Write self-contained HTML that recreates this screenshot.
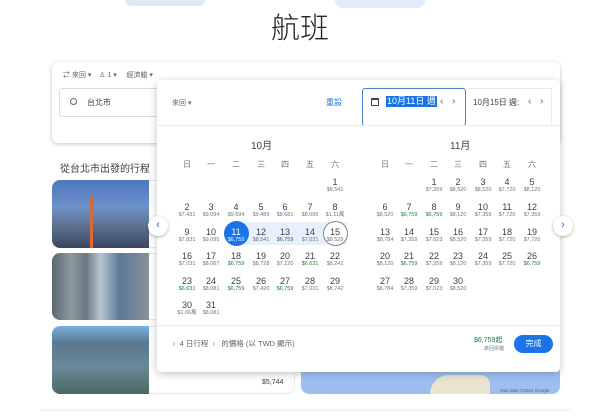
<!DOCTYPE html>
<html><head><meta charset="utf-8"><style>
*{margin:0;padding:0;box-sizing:border-box}
body{width:600px;height:417px;overflow:hidden;background:#fff;font-family:"Liberation Sans","Noto Sans CJK TC",sans-serif;color:#3c4043;position:relative}
.a{position:absolute}
i{position:absolute;width:30px;margin-left:-15px;text-align:center;font-style:normal;font-size:9px;line-height:10px;color:#3c4043}
i b{display:block;font-weight:normal;font-size:5.5px;line-height:7px;color:#70757a}
i.g b{color:#188038}
.wd{position:absolute;font-size:8px;color:#70757a;width:20px;margin-left:-10px;text-align:center}
</style></head><body>
<div class="a" style="left:125px;top:0;width:80px;height:6px;background:#dfe8f7;border-radius:0 0 40px 40px"></div>
<div class="a" style="left:335px;top:0;width:90px;height:8px;background:#e3ecf9;border-radius:0 0 45px 45px"></div>
<div class="a" style="left:0;top:5px;width:600px;text-align:center;font-size:29px;color:#202124;font-family:'Noto Sans CJK TC',sans-serif;font-weight:300">航班</div>

<div class="a" style="left:52px;top:62px;width:508px;height:81px;border-radius:6px;box-shadow:0 1px 4px rgba(60,64,67,.3);background:#fff"></div>
<div class="a" style="left:63px;top:70px;font-size:7px;color:#5f6368">⇄ 來回 ▾ &nbsp;&nbsp; ♙ 1 ▾ &nbsp;&nbsp;&nbsp; 經濟艙 ▾</div>
<div class="a" style="left:59px;top:88px;width:110px;height:29px;border:1px solid #dadce0;border-radius:3px"></div>
<div class="a" style="left:70px;top:98px;width:7px;height:7px;border:1.5px solid #5f6368;border-radius:50%"></div>
<div class="a" style="left:87px;top:97px;font-size:8px;color:#3c4043">台北市</div>

<div class="a" style="left:60px;top:160px;font-size:10px;color:#3c4043">從台北市出發的行程</div>
<div class="a" style="left:52px;top:180px;width:243px;height:68px;border:1px solid #e8eaed;border-radius:8px"></div>
<div class="a" style="left:52px;top:180px;width:97px;height:68px;border-radius:8px 0 0 8px;background:linear-gradient(#4a78c0,#6e90c8 40%,#5a6f8a 70%,#3a4660)"></div>
<div class="a" style="left:90px;top:196px;width:3px;height:52px;background:linear-gradient(#c86a40,#e86830)"></div>
<div class="a" style="left:52px;top:253px;width:243px;height:67px;border:1px solid #e8eaed;border-radius:8px"></div>
<div class="a" style="left:52px;top:253px;width:97px;height:67px;border-radius:8px 0 0 8px;background:linear-gradient(90deg,#5a6a70,#8a9aa0 20%,#6a7880 35%,#b8c6d0 50%,#5a7a95 70%,#8a9098)"></div>
<div class="a" style="left:52px;top:326px;width:243px;height:68px;border:1px solid #e8eaed;border-radius:8px"></div>
<div class="a" style="left:52px;top:326px;width:97px;height:68px;border-radius:8px 0 0 8px;background:linear-gradient(#7ab0e0,#5a7890 25%,#6a8898 60%,#4a6a60)"></div>
<div class="a" style="left:262px;top:379px;font-size:7px;color:#3c4043">$5,744</div>
<div class="a" style="left:301px;top:362px;width:259px;height:32px;border-radius:0 0 8px 8px;background:#9dbff0"></div>
<div class="a" style="left:430px;top:375px;width:60px;height:19px;background:#e8e4d0;border-radius:40px 20px 0 0"></div>
<div class="a" style="left:500px;top:388px;font-size:4.5px;color:#5f6368">Map data ©2022 Google</div>
<div class="a" style="left:40px;top:409px;width:530px;height:2px;background:#f1f3f4"></div>

<div class="a" style="left:157px;top:80px;width:403px;height:292px;background:#fff;border-radius:4px;box-shadow:0 2px 8px rgba(60,64,67,.3)"></div>
<div class="a" style="left:172px;top:98px;font-size:7px;color:#5f6368">來回 ▾</div>
<div class="a" style="left:326px;top:97px;font-size:8px;color:#1a73e8">重設</div>
<div class="a" style="left:362px;top:88px;width:104px;height:38px;border:1.5px solid #4a80d0;border-radius:3px"></div>
<div class="a" style="left:466px;top:88px;width:86px;height:38px;border:1px solid #e8eaed;border-left:none"></div>
<div class="a" style="left:371px;top:98px;width:8px;height:8px;border:1.3px solid #3c4043;border-top-width:2.5px;border-radius:1px"></div>
<div class="a" style="left:386px;top:96px;font-size:9px;background:#1a73e8;color:#fff;padding:0 1px;line-height:11px">10月11日 週</div>
<div class="a" style="left:440px;top:96px;font-size:10px;color:#5f6368;word-spacing:6px">‹ ›</div>
<div class="a" style="left:473px;top:97px;font-size:8px;color:#3c4043">10月15日 週:</div>
<div class="a" style="left:528px;top:96px;font-size:10px;color:#5f6368;word-spacing:6px">‹ ›</div>
<div class="a" style="left:157px;top:125px;width:403px;height:1px;background:#e8eaed"></div>

<div class="a" style="left:251px;top:137px;font-size:10px;color:#3c4043">10月</div>
<div class="a" style="left:450px;top:137px;font-size:10px;color:#3c4043">11月</div>
<span class="wd" style="left:187px;top:159px">日</span><span class="wd" style="left:211px;top:159px">一</span><span class="wd" style="left:236px;top:159px">二</span><span class="wd" style="left:261px;top:159px">三</span><span class="wd" style="left:285px;top:159px">四</span><span class="wd" style="left:310px;top:159px">五</span><span class="wd" style="left:335px;top:159px">六</span>
<span class="wd" style="left:385px;top:159px">日</span><span class="wd" style="left:409px;top:159px">一</span><span class="wd" style="left:434px;top:159px">二</span><span class="wd" style="left:458px;top:159px">三</span><span class="wd" style="left:483px;top:159px">四</span><span class="wd" style="left:507px;top:159px">五</span><span class="wd" style="left:532px;top:159px">六</span>

<div class="a" style="left:236px;top:222px;width:111px;height:23px;background:#e8f0fe"></div>
<div class="a" style="left:224px;top:221px;width:25px;height:25px;border-radius:50%;background:#1a73e8"></div>
<div class="a" style="left:323px;top:221px;width:25px;height:25px;border-radius:50%;border:1px solid #80868b;background:#fff"></div>

<i style="left:335px;top:177px">1<b>$8,541</b></i>
<i style="left:187px;top:202px">2<b>$7,431</b></i><i style="left:211px;top:202px">3<b>$9,094</b></i><i style="left:236px;top:202px">4<b>$9,694</b></i><i style="left:261px;top:202px">5<b>$9,489</b></i><i style="left:285px;top:202px">6<b>$8,681</b></i><i style="left:310px;top:202px">7<b>$8,095</b></i><i style="left:335px;top:202px">8<b>$1.11萬</b></i>
<i style="left:187px;top:227px">9<b>$7,831</b></i><i style="left:211px;top:227px">10<b>$9,095</b></i><i style="left:236px;top:227px;color:#fff">11<b style="color:#fff">$6,759</b></i><i style="left:261px;top:227px">12<b>$8,541</b></i><i class="g" style="left:285px;top:227px">13<b>$6,759</b></i><i style="left:310px;top:227px">14<b>$7,031</b></i><i style="left:335px;top:227px">15<b>$8,528</b></i>
<i style="left:187px;top:251px">16<b>$7,031</b></i><i style="left:211px;top:251px">17<b>$8,067</b></i><i class="g" style="left:236px;top:251px">18<b>$6,759</b></i><i style="left:261px;top:251px">19<b>$8,728</b></i><i style="left:285px;top:251px">20<b>$7,120</b></i><i class="g" style="left:310px;top:251px">21<b>$6,631</b></i><i style="left:335px;top:251px">22<b>$8,241</b></i>
<i class="g" style="left:187px;top:276px">23<b>$6,631</b></i><i style="left:211px;top:276px">24<b>$8,081</b></i><i class="g" style="left:236px;top:276px">25<b>$6,759</b></i><i style="left:261px;top:276px">26<b>$7,420</b></i><i class="g" style="left:285px;top:276px">27<b>$6,759</b></i><i style="left:310px;top:276px">28<b>$7,031</b></i><i style="left:335px;top:276px">29<b>$8,742</b></i>
<i style="left:187px;top:300px">30<b>$1.06萬</b></i><i style="left:211px;top:300px">31<b>$8,081</b></i>

<i style="left:434px;top:177px">1<b>$7,359</b></i><i style="left:458px;top:177px">2<b>$8,520</b></i><i style="left:483px;top:177px">3<b>$8,520</b></i><i style="left:507px;top:177px">4<b>$7,720</b></i><i style="left:532px;top:177px">5<b>$8,120</b></i>
<i style="left:385px;top:202px">6<b>$8,520</b></i><i class="g" style="left:409px;top:202px">7<b>$6,759</b></i><i class="g" style="left:434px;top:202px">8<b>$6,759</b></i><i style="left:458px;top:202px">9<b>$8,120</b></i><i style="left:483px;top:202px">10<b>$7,359</b></i><i style="left:507px;top:202px">11<b>$7,720</b></i><i style="left:532px;top:202px">12<b>$7,359</b></i>
<i style="left:385px;top:227px">13<b>$8,784</b></i><i style="left:409px;top:227px">14<b>$7,359</b></i><i style="left:434px;top:227px">15<b>$7,623</b></i><i style="left:458px;top:227px">16<b>$8,520</b></i><i style="left:483px;top:227px">17<b>$7,359</b></i><i style="left:507px;top:227px">18<b>$7,720</b></i><i style="left:532px;top:227px">19<b>$7,720</b></i>
<i style="left:385px;top:251px">20<b>$8,120</b></i><i class="g" style="left:409px;top:251px">21<b>$6,759</b></i><i style="left:434px;top:251px">22<b>$7,359</b></i><i style="left:458px;top:251px">23<b>$8,120</b></i><i style="left:483px;top:251px">24<b>$7,359</b></i><i style="left:507px;top:251px">25<b>$7,720</b></i><i class="g" style="left:532px;top:251px">26<b>$6,759</b></i>
<i style="left:385px;top:276px">27<b>$8,784</b></i><i style="left:409px;top:276px">28<b>$7,359</b></i><i style="left:434px;top:276px">29<b>$7,023</b></i><i style="left:458px;top:276px">30<b>$8,520</b></i>

<div class="a" style="left:157px;top:325px;width:403px;height:1px;background:#e8eaed"></div>
<div class="a" style="left:173px;top:338px;font-size:7.5px;color:#5f6368">‹ &nbsp;4 日行程 &nbsp;› &nbsp;&nbsp;的價格 (以 TWD 顯示)</div>
<div class="a" style="left:474px;top:335px;font-size:7px;color:#188038">$6,759起</div>
<div class="a" style="left:484px;top:345px;font-size:5px;color:#70757a">來回票價</div>
<div class="a" style="left:514px;top:335px;width:39px;height:18px;border-radius:9px;background:#1a73e8;color:#fff;font-size:8px;text-align:center;line-height:18px">完成</div>

<div class="a" style="left:148px;top:216px;width:20px;height:20px;border-radius:50%;background:#fff;box-shadow:0 1px 3px rgba(0,0,0,.3);color:#1a73e8;font-size:11px;text-align:center;line-height:19px">‹</div>
<div class="a" style="left:553px;top:216px;width:20px;height:20px;border-radius:50%;background:#fff;box-shadow:0 1px 3px rgba(0,0,0,.3);color:#1a73e8;font-size:11px;text-align:center;line-height:19px">›</div>
</body></html>
